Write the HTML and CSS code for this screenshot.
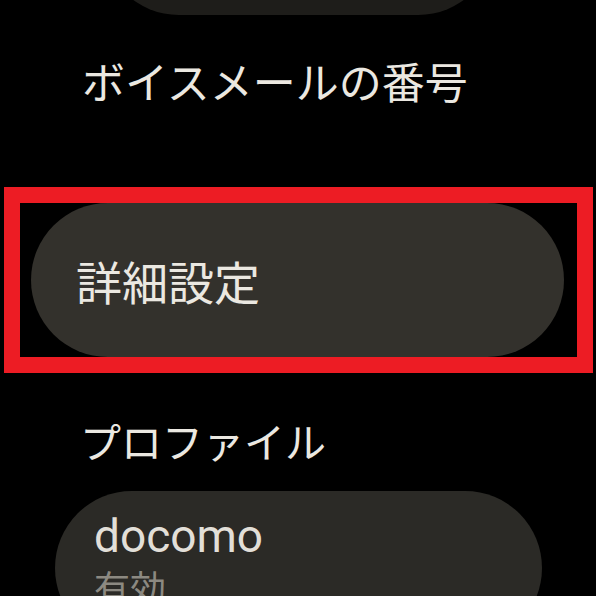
FILE: index.html
```html
<!DOCTYPE html>
<html lang="ja">
<head>
<meta charset="utf-8">
<link rel="stylesheet" href="styles.css">
</head>
<body>
<div class="screen">
  <div class="pill-top"></div>
  <div class="row-title">ボイスメールの番号</div>
  <div class="highlight">
    <div class="pill-main"><span class="pill-label">詳細設定</span></div>
  </div>
  <div class="section-title">プロファイル</div>
  <div class="pill-profile">
    <div class="profile-name">docomo</div>
    <div class="profile-status">有効</div>
  </div>
</div>
</body>
</html>
```
FILE: styles.css
```css
html, body {
  margin: 0;
  padding: 0;
  background: #000;
  overflow: hidden;
}
.screen {
  width: 596px;
  height: 596px;
  overflow: hidden;
  background: #000;
  font-family: "Noto Sans CJK JP", "Noto Sans", sans-serif;
  color: #ebe8e1;
}
.pill-top {
  width: 393px;
  height: 154px;
  margin: -139px 0 0 102px;
  background: #1e1d1a;
  border-radius: 77px;
}
.row-title {
  margin: 40px 0 0 82px;
  font-size: 43px;
  line-height: 50px;
  white-space: nowrap;
}
.highlight {
  box-sizing: border-box;
  width: 589px;
  height: 186px;
  margin: 82px 0 0 4px;
  border: 16px solid #ed1c24;
}
.pill-main {
  box-sizing: border-box;
  width: 533px;
  height: 154px;
  margin-left: 11px;
  background: #33312c;
  border-radius: 77px;
  display: flex;
  align-items: center;
  padding-left: 45px;
}
.pill-label {
  font-size: 46px;
  line-height: 50px;
  white-space: nowrap;
}
.section-title {
  margin: 42px 0 0 80px;
  font-size: 41px;
  line-height: 50px;
  white-space: nowrap;
}
.pill-profile {
  box-sizing: border-box;
  width: 487px;
  height: 154px;
  margin: 26px 0 0 55px;
  background: #2b2a26;
  border-radius: 77px;
  padding: 18px 0 0 39px;
}
.profile-name {
  font-family: Roboto, "Noto Sans", sans-serif;
  font-size: 46px;
  line-height: 55px;
  color: #e2dfd8;
}
.profile-status {
  font-size: 36px;
  line-height: 44px;
  color: #8c8981;
}
```
